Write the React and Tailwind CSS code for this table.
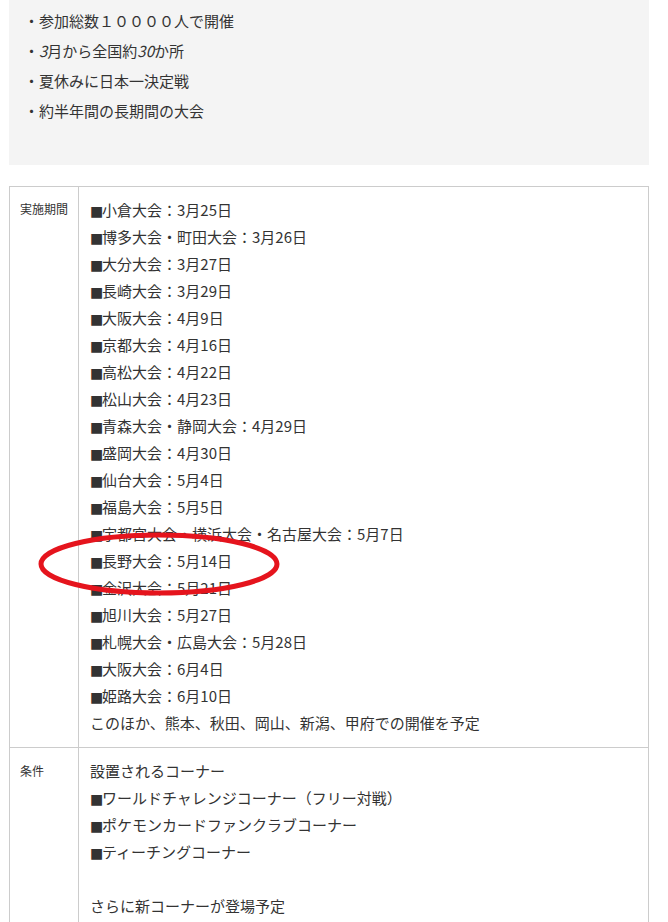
import React from "react";

const schedule = [
  "■小倉大会：3月25日",
  "■博多大会・町田大会：3月26日",
  "■大分大会：3月27日",
  "■長崎大会：3月29日",
  "■大阪大会：4月9日",
  "■京都大会：4月16日",
  "■高松大会：4月22日",
  "■松山大会：4月23日",
  "■青森大会・静岡大会：4月29日",
  "■盛岡大会：4月30日",
  "■仙台大会：5月4日",
  "■福島大会：5月5日",
  "■宇都宮大会・横浜大会・名古屋大会：5月7日",
  "■長野大会：5月14日",
  "■金沢大会：5月21日",
  "■旭川大会：5月27日",
  "■札幌大会・広島大会：5月28日",
  "■大阪大会：6月4日",
  "■姫路大会：6月10日",
  "このほか、熊本、秋田、岡山、新潟、甲府での開催を予定",
];

const conditions = [
  "設置されるコーナー",
  "■ワールドチャレンジコーナー（フリー対戦）",
  "■ポケモンカードファンクラブコーナー",
  "■ティーチングコーナー",
  "\u00a0",
  "さらに新コーナーが登場予定",
];

function Line({ text }) {
  if (text.startsWith("■")) {
    return (
      <div className="h-[27px] leading-[27px] whitespace-nowrap">
        <span className="inline-block w-[12px] font-['DejaVu_Sans'] text-[14px]">■</span>
        {text.slice(1)}
      </div>
    );
  }
  return <div className="h-[27px] leading-[27px] whitespace-nowrap">{text}</div>;
}

export default function App() {
  return (
    <div
      className="relative min-h-[922px] bg-white text-[#333333] overflow-hidden"
      style={{ fontFamily: '"Noto Sans CJK JP", "Noto Sans", sans-serif' }}
    >
      <div className="ml-[9px] w-[640px]">
        <div className="bg-[#f4f4f4] pl-[15px] pt-[6px] pb-[39px] text-[15px]">
          <div className="h-[30px] leading-[30px]">・参加総数１００００人で開催</div>
          <div className="h-[30px] leading-[30px]">
            ・<i>3</i>月から全国約<i>30</i>か所
          </div>
          <div className="h-[30px] leading-[30px]">・夏休みに日本一決定戦</div>
          <div className="h-[30px] leading-[30px]">・約半年間の長期間の大会</div>
        </div>

        <div className="mt-[21px] border border-[#cccccc] text-[15px]">
          <div className="flex">
            <div className="w-[69px] shrink-0 border-r border-[#cccccc] pl-[10px] pt-[13px] text-[12px] leading-[18px]">
              実施期間
            </div>
            <div className="flex-1 pl-[11px] pt-[9px] pb-[11px]">
              {schedule.map((t, i) => (
                <Line key={i} text={t} />
              ))}
            </div>
          </div>
          <div className="flex border-t border-[#cccccc]">
            <div className="w-[69px] shrink-0 border-r border-[#cccccc] pl-[10px] pt-[14px] text-[12px] leading-[18px]">
              条件
            </div>
            <div className="flex-1 pl-[11px] pt-[9px] pb-[11px]">
              {conditions.map((t, i) => (
                <Line key={i} text={t} />
              ))}
            </div>
          </div>
        </div>
      </div>

      <svg
        className="absolute left-0 top-0 pointer-events-none"
        width="668"
        height="922"
        viewBox="0 0 668 922"
      >
        <ellipse
          cx="159"
          cy="564"
          rx="118"
          ry="29"
          fill="none"
          stroke="#e5141d"
          strokeWidth="5"
        />
      </svg>
    </div>
  );
}
